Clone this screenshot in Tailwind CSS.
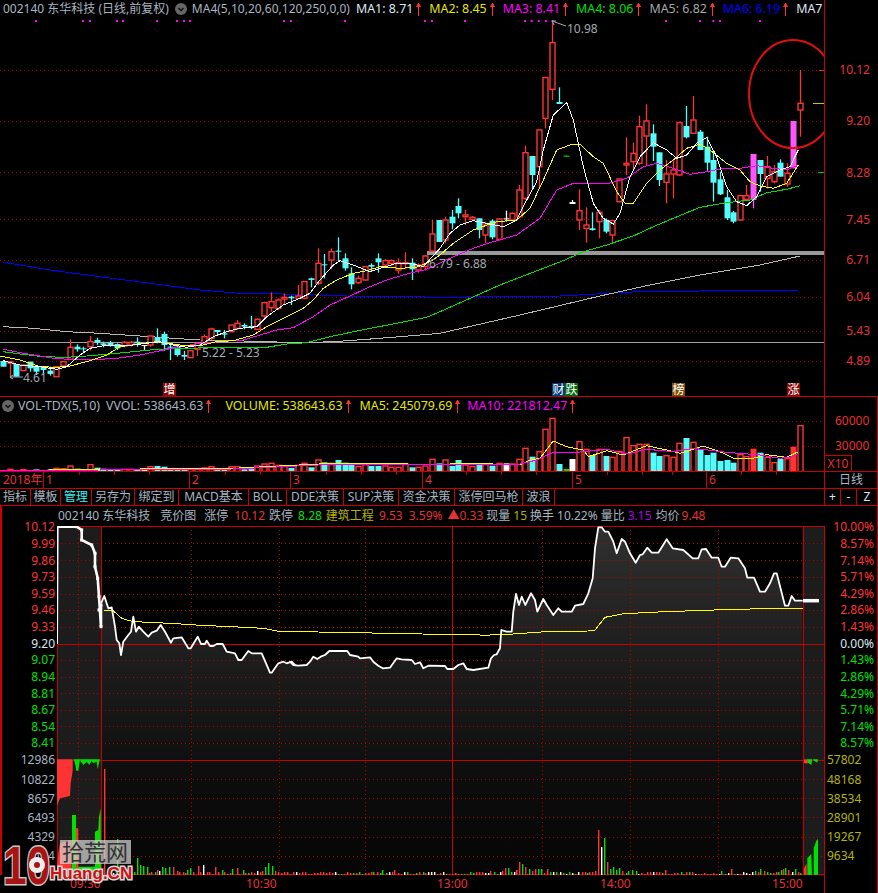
<!DOCTYPE html>
<html lang="zh">
<head>
<meta charset="UTF-8">
<title>002140 东华科技</title>
<script src="https://cdn.jsdelivr.net/npm/@tailwindcss/browser@4"></script>
</head>
<body class="bg-black">
<div class="relative w-[878px] h-[893px] overflow-hidden bg-black text-[12px] leading-none text-[#a8b4c0] font-['Noto_Sans','Noto_Sans_CJK_SC',sans-serif]">

  <!-- k line -->
  <div class="flex h-[397px] border-b border-[#c80000]">
    <div class="relative w-[825px] border-r border-[#c80000]">
      <svg id="kline" class="block" width="824" height="396" viewBox="0 0 824 396">
        <g stroke="#a00000" stroke-dasharray="1 3">
          <path d="M0 70.5H824M0 121.5H824M0 172.5H824M0 219.5H824M0 260.5H824M0 297.5H824M0 331.5H824M0 361.5H824"/>
        </g>
        <path d="M0 342.5H824" stroke="#a0a0a0"/>
        <rect x="427" y="251" width="397" height="4" fill="#999"/>
        <path d="M819 70.5H824" stroke="#e63232"/>
        <path d="M813 103.5H824" stroke="#c8c800"/>
        <path d="M818 172.5H824" stroke="#00d000"/>
        <g id="dots" fill="#ff00ff"></g>
        <g id="lines-back" fill="none"></g>
        <g id="candles"></g>
        <g id="lines-front" fill="none"></g>
        <g font-family="Noto Sans" font-size="12" fill="#a0a8b0">
          <text x="567" y="33">10.98</text>
          <text x="429" y="268">6.79 - 6.88</text>
          <text x="202" y="357">5.22 - 5.23</text>
          <text x="23" y="382">4.61</text>
        </g>
        <path d="M552 21L566 26M552 21l4 0M552 21l2 4M10 377H23M10 377l3-2M10 377l3 2" stroke="#a0a8b0" fill="none"/>
        <ellipse cx="793" cy="94" rx="44" ry="54" fill="none" stroke="#e01010" stroke-width="2"/>
      </svg>
      <div class="absolute left-[3px] top-[2px] flex items-center h-[14px] whitespace-nowrap">
        <span>002140 东华科技 (日线,前复权)</span>
        <svg class="ml-[6px] shrink-0" width="12" height="12" viewBox="0 0 12 12"><circle cx="6" cy="6" r="6" fill="#666"/><path d="M3.5 5L6 7.5L8.5 5" stroke="#111" stroke-width="1.5" fill="none"/></svg>
        <span class="ml-[5px]">MA4(5,10,20,60,120,250,0,0)</span>
        <span class="ml-[6px] text-[12.4px] text-[#dce6f0]">MA1: 8.71</span>
        <svg class="ml-[3px] shrink-0" width="5" height="14" viewBox="0 0 5 14"><path d="M2.5 1V14M0.5 5L2.5 1L4.500 5" stroke="#ff3333" fill="#ff3333"/></svg>
        <span class="ml-[8px] text-[12.4px] text-[#e6e600]">MA2: 8.45</span>
        <svg class="ml-[3px] shrink-0" width="5" height="14" viewBox="0 0 5 14"><path d="M2.5 1V14M0.5 5L2.5 1L4.500 5" stroke="#ff3333" fill="#ff3333"/></svg>
        <span class="ml-[8px] text-[12.4px] text-[#ff00ff]">MA3: 8.41</span>
        <svg class="ml-[3px] shrink-0" width="5" height="14" viewBox="0 0 5 14"><path d="M2.5 1V14M0.5 5L2.5 1L4.500 5" stroke="#ff3333" fill="#ff3333"/></svg>
        <span class="ml-[8px] text-[12.4px] text-[#00e000]">MA4: 8.06</span>
        <svg class="ml-[3px] shrink-0" width="5" height="14" viewBox="0 0 5 14"><path d="M2.5 1V14M0.5 5L2.5 1L4.500 5" stroke="#ff3333" fill="#ff3333"/></svg>
        <span class="ml-[8px] text-[12.4px] text-[#a8a8a8]">MA5: 6.82</span>
        <svg class="ml-[3px] shrink-0" width="5" height="14" viewBox="0 0 5 14"><path d="M2.5 1V14M0.5 5L2.5 1L4.500 5" stroke="#ff3333" fill="#ff3333"/></svg>
        <span class="ml-[8px] text-[12.4px] text-[#0000ff]">MA6: 6.19</span>
        <svg class="ml-[3px] shrink-0" width="5" height="14" viewBox="0 0 5 14"><path d="M2.5 1V14M0.5 5L2.5 1L4.500 5" stroke="#ff3333" fill="#ff3333"/></svg>
        <span class="ml-[8px] text-[12.4px] text-[#dce6f0]">MA7</span>
      </div>
      <div class="absolute left-[163px] top-[383px] w-[13px] h-[13px] bg-[#8a0505] text-white flex items-center justify-center">增</div>
      <div class="absolute left-[552px] top-[383px] w-[13px] h-[13px] bg-[#003a78] text-white flex items-center justify-center">财</div>
      <div class="absolute left-[565px] top-[383px] w-[13px] h-[13px] bg-[#006a10] text-white flex items-center justify-center">跌</div>
      <div class="absolute left-[672px] top-[383px] w-[13px] h-[13px] bg-[#80500a] text-white flex items-center justify-center">榜</div>
      <div class="absolute left-[787px] top-[383px] w-[13px] h-[13px] bg-[#8a0505] text-white flex items-center justify-center">涨</div>
    </div>
    <div class="flex-1 flex flex-col items-end pr-[8px] pt-[64px] text-[#e63232]">
      <div class="h-[51px]">10.12</div>
      <div class="h-[52px]">9.20</div>
      <div class="h-[47px]">8.28</div>
      <div class="h-[40px]">7.45</div>
      <div class="h-[37px]">6.71</div>
      <div class="h-[34px]">6.04</div>
      <div class="h-[30px]">5.43</div>
      <div>4.89</div>
    </div>
  </div>

  <!-- volume -->
  <div class="flex h-[75px] border-b border-[#c80000]">
    <div class="relative w-[825px] border-r border-[#c80000]">
      <svg id="vol" class="block" width="824" height="74" viewBox="0 397 824 74">
        <path d="M0 421.500H824M0 446.500H824" stroke="#a00000" stroke-dasharray="1 3"/>
        <g id="vol-bars"></g>
        <g id="vol-lines" fill="none" shape-rendering="crispEdges"></g>
      </svg>
      <div class="absolute left-[2px] top-0 flex items-center h-[16px] whitespace-nowrap mt-[1px] text-[12.4px]">
        <svg class="shrink-0" width="12" height="12" viewBox="0 0 12 12"><circle cx="6" cy="6" r="6" fill="#666"/><path d="M3.5 5L6 7.5L8.5 5" stroke="#111" stroke-width="1.5" fill="none"/></svg>
        <span class="ml-[4px]">VOL-TDX(5,10)</span>
        <span class="ml-[6px]">VVOL: 538643.63</span>
        <svg class="ml-[3px] shrink-0" width="5" height="14" viewBox="0 0 5 14"><path d="M2.5 1V14M0.5 5L2.5 1L4.500 5" stroke="#ff3333" fill="#ff3333"/></svg>
        <span class="ml-[14px] text-[#e6e600]">VOLUME: 538643.63</span>
        <svg class="ml-[3px] shrink-0" width="5" height="14" viewBox="0 0 5 14"><path d="M2.5 1V14M0.5 5L2.5 1L4.500 5" stroke="#ff3333" fill="#ff3333"/></svg>
        <span class="ml-[9px] text-[#e6e600]">MA5: 245079.69</span>
        <svg class="ml-[3px] shrink-0" width="5" height="14" viewBox="0 0 5 14"><path d="M2.5 1V14M0.5 5L2.5 1L4.500 5" stroke="#ff3333" fill="#ff3333"/></svg>
        <span class="ml-[7px] text-[#ff00ff]">MA10: 221812.47</span>
        <svg class="ml-[3px] shrink-0" width="5" height="14" viewBox="0 0 5 14"><path d="M2.5 1V14M0.5 5L2.5 1L4.500 5" stroke="#ff3333" fill="#ff3333"/></svg>
      </div>
    </div>
    <div class="flex-1 flex flex-col text-[#e63232] border-r border-[#c80000]">
      <div class="pt-[18px] pl-[10px]">60000</div>
      <div class="pt-[13px] pl-[10px]">30000</div>
      <div class="mt-[3px] w-[27px] h-[18px] border border-b-0 border-l-0 border-[#c80000] flex items-center justify-center">X10</div>
    </div>
  </div>

  <!-- date axis -->
  <div class="flex h-[16px] text-[#e63232]">
    <div class="relative w-[825px] flex border-r border-[#c80000]">
      <div class="w-[43px] pl-[3px] flex items-center">2018年</div>
      <div class="w-[146px] pl-[2px] flex items-center border-l border-[#c80000]">1</div>
      <div class="w-[101px] pl-[2px] flex items-center border-l border-[#c80000]">2</div>
      <div class="w-[132px] pl-[2px] flex items-center border-l border-[#c80000]">3</div>
      <div class="w-[150px] pl-[2px] flex items-center border-l border-[#c80000]">4</div>
      <div class="w-[134px] pl-[2px] flex items-center border-l border-[#c80000]">5</div>
      <div class="flex-1 pl-[2px] flex items-center border-l border-[#c80000]">6</div>
      <svg class="absolute left-0 top-0" width="824" height="3" viewBox="0 0 824 3"><path d="M79.500 0v3M114.500 0v3M149.500 0v3M225.500 0v3M260.500 0v3M326.500 0v3M361.500 0v3M396.500 0v3M466.500 0v3M501.500 0v3M536.500 0v3M607.500 0v3M642.500 0v3M672.500 0v3M741.500 0v3M776.500 0v3" stroke="#c80000"/></svg>
    </div>
    <div class="flex-1 flex items-center justify-center text-[#a8b4c0] border-r border-[#c80000]">日线</div>
  </div>

  <!-- toolbar -->
  <div class="flex h-[18px] border-y border-[#c80000]">
    <div class="w-[825px] flex border-r border-[#c80000]">
      <div class="w-[31px] flex items-center justify-center border-r border-[#c80000]">指标</div>
      <div class="w-[30px] flex items-center justify-center border-r border-[#c80000]">模板</div>
      <div class="w-[31px] flex items-center justify-center border-r border-[#c80000] text-[#3cf0f0]">管理</div>
      <div class="w-[43px] flex items-center justify-center border-r border-[#c80000]">另存为</div>
      <div class="w-[44px] flex items-center justify-center border-r border-[#c80000]">绑定到</div>
      <div class="w-[70px] flex items-center justify-center border-r border-[#c80000]">MACD基本</div>
      <div class="w-[38px] flex items-center justify-center border-r border-[#c80000]">BOLL</div>
      <div class="w-[57px] flex items-center justify-center border-r border-[#c80000]">DDE决策</div>
      <div class="w-[55px] flex items-center justify-center border-r border-[#c80000]">SUP决策</div>
      <div class="w-[56px] flex items-center justify-center border-r border-[#c80000]">资金决策</div>
      <div class="w-[68px] flex items-center justify-center border-r border-[#c80000]">涨停回马枪</div>
      <div class="w-[32px] flex items-center justify-center border-r border-[#c80000]">波浪</div>
    </div>
    <div class="flex-1 flex text-[#dce6f0] border-r border-[#c80000]">
      <div class="w-[16px] flex items-center justify-center border-r border-[#c80000]">+</div>
      <div class="w-[16px] flex items-center justify-center border-r border-[#c80000]">-</div>
      <div class="flex-1 flex items-center justify-center">Z</div>
    </div>
  </div>

  <!-- time share -->
  <div class="flex flex-col h-[369px] border-l-[2px] border-r border-[#c80000]">
    <div class="flex items-center h-[20px] pl-[56px] whitespace-nowrap">
      <span>002140 东华科技</span>
      <span class="ml-[10px]">竞价图</span>
      <span class="ml-[8px]">涨停</span>
      <span class="ml-[6px] text-[#e63232]">10.12</span>
      <span class="ml-[4px]">跌停</span>
      <span class="ml-[5px] text-[#00e000]">8.28</span>
      <span class="ml-[4px] text-[#b4b400]">建筑工程</span>
      <span class="ml-[5px] text-[#e63232]">9.53</span>
      <span class="ml-[6px] text-[#e63232]">3.59%</span>
      <span class="ml-[5px] text-[#e63232]">▲0.33</span>
      <span class="ml-[3px]">现量</span>
      <span class="ml-[3px] text-[#b4b400]">15</span>
      <span class="ml-[3px]">换手</span>
      <span class="ml-[3px]">10.22%</span>
      <span class="ml-[3px]">量比</span>
      <span class="ml-[3px] text-[#b000e0]">3.15</span>
      <span class="ml-[4px]">均价</span>
      <span class="ml-[2px] text-[#e63232]">9.48</span>
    </div>
    <div class="flex flex-1">
      <div class="w-[55px] -mt-[7px] pr-[2px] flex flex-col items-end">
        <div class="h-[16.63px] flex items-center text-[#ff3333]">10.12</div>
        <div class="h-[16.63px] flex items-center text-[#ff3333]">9.99</div>
        <div class="h-[16.63px] flex items-center text-[#ff3333]">9.86</div>
        <div class="h-[16.63px] flex items-center text-[#ff3333]">9.73</div>
        <div class="h-[16.63px] flex items-center text-[#ff3333]">9.59</div>
        <div class="h-[16.63px] flex items-center text-[#ff3333]">9.46</div>
        <div class="h-[16.63px] flex items-center text-[#ff3333]">9.33</div>
        <div class="h-[16.63px] flex items-center text-[#dce6f0]">9.20</div>
        <div class="h-[16.63px] flex items-center text-[#00e000]">9.07</div>
        <div class="h-[16.63px] flex items-center text-[#00e000]">8.94</div>
        <div class="h-[16.63px] flex items-center text-[#00e000]">8.81</div>
        <div class="h-[16.63px] flex items-center text-[#00e000]">8.67</div>
        <div class="h-[16.63px] flex items-center text-[#00e000]">8.54</div>
        <div class="h-[16.63px] flex items-center text-[#00e000]">8.41</div>
        <div class="h-[19.2px] -mt-[1px] flex items-center">12986</div>
        <div class="h-[19.2px] flex items-center">10822</div>
        <div class="h-[19.2px] flex items-center">8657</div>
        <div class="h-[19.2px] flex items-center">6493</div>
        <div class="h-[19.2px] flex items-center">4329</div>
        <div class="h-[19.2px] flex items-center">2164</div>
      </div>
      <svg id="tick" class="block shrink-0" width="768" height="349" viewBox="57 526 768 349">
        <defs>
          <linearGradient id="area" gradientUnits="userSpaceOnUse" x1="0" y1="527" x2="0" y2="760">
            <stop offset="0" stop-color="#303030"/>
            <stop offset="0.5" stop-color="#1f1f1f"/>
            <stop offset="1" stop-color="#101010"/>
          </linearGradient>
          <linearGradient id="volbg" gradientUnits="userSpaceOnUse" x1="0" y1="760" x2="0" y2="875">
            <stop offset="0" stop-color="#0f0f0f"/>
            <stop offset="1" stop-color="#050505"/>
          </linearGradient>
        </defs>
        <rect x="102" y="760" width="701" height="115" fill="url(#volbg)"/>
        <rect x="57" y="526" width="44" height="349" fill="#1c1c1c"/>
        <rect x="803" y="526" width="22" height="349" fill="#1c1c1c"/>
        <path id="tick-area" fill="url(#area)"/>
        <g stroke="#b00000" stroke-dasharray="1 3">
          <path d="M57 543.500H824M57 560.500H824M57 577.500H824M57 594.500H824M57 610.500H824M57 627.500H824M57 660.500H824M57 677.500H824M57 693.500H824M57 710.500H824M57 726.500H824M57 743.500H824M57 779.500H824M57 798.500H824M57 817.500H824M57 837.500H824M57 856.500H824"/>
          <path d="M78.500 526V875M191.500 526V875M279.500 526V875M365.500 526V875M542.500 526V875M630.500 526V875M718.500 526V875"/>
        </g>
        <g stroke="#c80000">
          <path d="M57 526.500H825M57 644.500H825M57 760.500H825M57 874.500H825"/>
          <path d="M57.500 526V875M101.500 526V875M452.500 526V875M803.500 526V875M824.500 526V875"/>
        </g>
        <g id="tick-vol"></g>
        <g id="tick-lines" fill="none"></g>
      </svg>
      <div class="flex-1 -mt-[7px] pr-[3px] flex flex-col items-end">
        <div class="h-[16.63px] flex items-center text-[#ff3333]">10.00%</div>
        <div class="h-[16.63px] flex items-center text-[#ff3333]">8.57%</div>
        <div class="h-[16.63px] flex items-center text-[#ff3333]">7.14%</div>
        <div class="h-[16.63px] flex items-center text-[#ff3333]">5.71%</div>
        <div class="h-[16.63px] flex items-center text-[#ff3333]">4.29%</div>
        <div class="h-[16.63px] flex items-center text-[#ff3333]">2.86%</div>
        <div class="h-[16.63px] flex items-center text-[#ff3333]">1.43%</div>
        <div class="h-[16.63px] flex items-center text-[#dce6f0]">0.00%</div>
        <div class="h-[16.63px] flex items-center text-[#00e000]">1.43%</div>
        <div class="h-[16.63px] flex items-center text-[#00e000]">2.86%</div>
        <div class="h-[16.63px] flex items-center text-[#00e000]">4.29%</div>
        <div class="h-[16.63px] flex items-center text-[#00e000]">5.71%</div>
        <div class="h-[16.63px] flex items-center text-[#00e000]">7.14%</div>
        <div class="h-[16.63px] flex items-center text-[#00e000]">8.57%</div>
        <div class="self-start pl-[2px] -mt-[1px] text-[#b4b400]">
          <div class="h-[19.2px] flex items-center">57802</div>
          <div class="h-[19.2px] flex items-center">48168</div>
          <div class="h-[19.2px] flex items-center">38534</div>
          <div class="h-[19.2px] flex items-center">28901</div>
          <div class="h-[19.2px] flex items-center">19267</div>
          <div class="h-[19.2px] flex items-center">9634</div>
        </div>
      </div>
    </div>
  </div>

  <!-- time axis -->
  <div class="relative h-[18px] border-r border-[#c80000] text-[#e63232]">
    <div class="absolute left-[824px] top-0 h-[18px] border-l border-[#c80000]"></div>
    <div class="flex h-full items-center pl-[70px]">
      <span class="w-[176px]">09:30</span>
      <span class="w-[191px]">10:30</span>
      <span class="w-[163px]">13:00</span>
      <span class="w-[172px]">14:00</span>
      <span>15:00</span>
    </div>
  </div>

  <!-- watermark -->
  <svg class="absolute left-0 top-[838px]" width="140" height="55" viewBox="0 0 140 55">
    <rect x="60" y="2" width="71" height="24" fill="#cfcfcf" fill-opacity="0.75"/>
    <text x="62" y="22" font-family="Noto Sans CJK SC" font-size="22" fill="#333">拾荒网</text>
    <text x="3" y="46" font-family="Liberation Sans" font-size="54" font-weight="bold" fill="#a81414" stroke="#c8c8c8" stroke-width="3" paint-order="stroke" textLength="47" lengthAdjust="spacingAndGlyphs">10</text>
    <circle cx="37" cy="27" r="8" fill="#eee"/>
    <circle cx="37" cy="27" r="3" fill="#a81414"/>
    <text x="50" y="41" font-family="Liberation Sans" font-size="17" font-weight="bold" fill="#c81414" stroke="#d8d8d8" stroke-width="3" paint-order="stroke">Huang.CN</text>
  </svg>
</div>

<script>
  const NS = "http://www.w3.org/2000/svg";
  function add(parent, tag, attrs) {
    const el = document.createElementNS(NS, tag);
    for (const k in attrs) el.setAttribute(k, attrs[k]);
    parent.appendChild(el);
    return el;
  }
  const RED = "#ff3333", CYAN = "#54fcfc", MAG = "#ff55ff";
  const z7 = (p) => [p[0] / 3, 230 + p[1] / 3];
  const z2 = (p) => [440 + p[0] / 3, p[1] / 3];
  const pts = (a) => a.map((p) => p[0].toFixed(1) + "," + p[1].toFixed(1)).join(" ");

  // X, wick top, body top, body bottom, wick bottom, kind, volume top
  const left = [
    [10,393,393,410,410,"c",270],[29,395,395,400,445,"r",268],[48,402,402,440,440,"c",272],[69,405,405,422,422,"r",269],
    [90,395,395,415,425,"c",274],[109,408,408,425,435,"c",268],[130,408,408,420,433,"c",271],[150,410,422,432,437,"c",268],
    [168,410,410,440,440,"r",265],[189,395,395,408,408,"r",266],[209,328,352,388,390,"r",258],[231,343,350,358,365,"c",266],
    [250,350,355,358,370,"c",268],[270,318,335,350,362,"r",254],[291,323,330,338,345,"c",263],[310,335,340,345,352,"c",266],
    [331,333,338,345,350,"c",268],[351,340,342,355,360,"c",268],[371,333,337,348,352,"r",268],[392,333,337,345,350,"r",268],
    [412,322,335,340,350,"c",268],[432,345,345,347,362,"w",270],[451,316,318,345,350,"r",260],[471,295,322,335,340,"c",258],
    [492,305,312,345,362,"c",260],[511,340,350,352,390,"c",265],[532,345,350,375,380,"c",266],[552,363,375,380,390,"c",267],
    [571,362,362,383,383,"r",268],[591,338,340,358,378,"r",266],[612,313,320,340,345,"r",264],[632,293,297,325,330,"r",260],
    [652,300,300,306,318,"c",266],[672,300,310,314,325,"c",268],[692,285,285,305,305,"r",260],[712,270,280,295,300,"r",260],
    [732,280,285,290,298,"c",268],[753,258,288,292,298,"c",262],[771,265,268,298,300,"r",258],[793,215,218,258,270,"r",252],
    [813,187,215,233,245,"r",250],[833,205,210,235,240,"r",256],[853,190,202,207,222,"r",258],[873,197,200,205,225,"c",264],
    [893,165,198,205,205,"r",256],[912,153,155,205,208,"r",250],[933,143,145,150,172,"c",262],[954,55,100,160,165,"r",240],
    [973,72,103,105,145,"c",247],[993,55,65,90,118,"r",250],[1013,22,62,65,95,"c",240],[1036,70,85,115,122,"c",248],
    [1053,112,130,163,178,"c",255],[1074,137,145,158,162,"r",260],[1094,108,110,150,152,"r",254],[1114,100,105,110,125,"c",258],
    [1134,70,85,97,128,"c",258],[1155,87,92,105,108,"r",258],[1173,88,92,100,108,"r",262],[1194,85,98,120,132,"r",262],
    [1214,67,98,100,118,"r",252],[1235,85,98,118,150,"c",262],[1254,100,105,120,128,"r",262],[1274,75,78,110,122,"r",258],
    [1296,-30,12,63,63,"r",238],[1316,-30,-30,36,36,"c",250]
  ];
  const right = [
    [15,650,660,720,730,"r",240],[37,630,650,670,688,"c",258],[55,595,618,640,655,"c",240],[76,630,645,650,675,"r",255],
    [97,648,652,658,660,"r",260],[116,655,655,690,715,"c",253],[135,665,672,705,730,"r",252],[157,658,662,712,718,"c",257],
    [177,655,657,718,722,"r",250],[197,632,655,658,665,"w",250],[216,637,640,660,665,"r",252],[237,555,570,650,655,"r",238],
    [255,437,458,595,600,"r",205],[277,468,468,525,565,"c",230],[296,388,390,500,565,"r",215],[316,230,233,355,385,"r",148],
    [336,62,128,268,300,"r",115],[356,262,306,312,312,"c",252],[377,467,467,470,470,"g",267],[397,600,606,612,612,"w",237],
    [417,568,632,660,690,"r",185],[437,622,675,685,728,"r",208],[457,637,685,690,692,"c",225],[477,630,637,665,715,"r",208],
    [497,655,660,695,700,"c",228],[517,662,662,705,733,"r",232],[537,535,537,605,607,"r",214],[557,412,490,495,525,"r",173],
    [578,428,460,485,510,"r",197],[597,347,380,490,495,"r",193],[618,313,363,408,495,"r",193],[640,373,400,440,483,"c",218],
    [658,457,457,540,558,"c",228],[678,480,522,547,610,"r",227],[698,480,510,522,595,"r",232],[717,365,368,525,527,"r",190],
    [738,318,378,412,415,"c",174],[759,288,360,400,402,"r",187],[780,390,395,450,450,"c",208],[800,410,440,488,512,"c",225],
    [820,455,480,548,605,"c",218],[840,515,538,583,585,"c",243],[860,570,592,655,660,"c",240],[880,633,637,665,670,"c",248],
    [900,585,587,660,662,"r",224],[919,555,587,598,600,"r",230],[940,462,462,600,625,"m",206],[960,480,480,522,575,"c",218],
    [982,468,500,535,565,"r",232],[1002,495,515,545,550,"r",248],[1020,478,488,530,530,"c",236],[1040,490,520,552,560,"r",236],
    [1060,363,363,505,505,"m",200],[1080,210,310,330,410,"r",137]
  ];

  const kinds = { r: RED, c: CYAN, m: MAG, w: "#ffffff", g: "#00e000" };
  const candles = document.getElementById("candles");
  const volBars = document.getElementById("vol-bars");
  function drawCandle(c, conv, volBase) {
    const col = kinds[c[5]];
    const x = Math.round(conv([c[0], 0])[0]) + 0.5;
    const y = (v) => conv([0, v])[1];
    add(candles, "line", { x1: x, x2: x, y1: y(c[1]), y2: y(c[4]), stroke: col, "stroke-width": 1.3 });
    const top = y(c[2]), h = Math.max(y(c[3]) - top, 1);
    if (c[5] === "r") add(candles, "rect", { x: x - 2.5, y: top, width: 5, height: h, fill: "#000", stroke: col, "stroke-width": 1.4 });
    else add(candles, "rect", { x: x - 3, y: top, width: 6, height: h, fill: col });
    const vt = 380 + c[6] / 3;
    if (c[5] === "r") add(volBars, "rect", { x: x - 2.5, y: vt, width: 5, height: 472 - vt, fill: "#000", stroke: col, "stroke-width": 1.4 });
    else add(volBars, "rect", { x: x - 3, y: vt, width: 6, height: 472 - vt, fill: c[5] === "m" ? RED : col });
  }
  left.forEach((c) => drawCandle(c, z7));
  right.forEach((c) => drawCandle(c, z2));

  // moving averages
  const back = document.getElementById("lines-back");
  const front = document.getElementById("lines-front");
  const blue = [[10,97],[150,120],[300,140],[450,160],[600,180],[720,190],[900,193],[1040,198],[1230,200],[1320,202]].map(z7).concat([[560,296],[650,291],[700,291],[800,290]]);
  const gray = [[10,290],[100,295],[200,305],[300,310],[420,318],[520,325],[600,330],[700,332],[900,338],[1000,335],[1100,328],[1200,320],[1320,310]].map(z7).concat([[520,315],[600,296],[650,285],[700,275],[760,265],[800,256]]);
  const green = [[10,365],[60,372],[130,380],[200,382],[260,378],[330,372],[400,365],[470,358],[550,355],[640,353],[740,353],[800,352],[860,342],[920,338],[1000,318],[1100,297],[1200,278],[1280,262],[1320,245]].map(z7).concat([[500,285]]).concat([[375,780],[430,755],[500,735],[580,708],[640,680],[700,655],[780,622],[860,608],[930,600],[980,578],[1040,568],[1080,557]].map(z2));
  const magenta = [[10,358],[60,368],[120,378],[160,385],[240,390],[300,388],[350,385],[420,375],[480,362],[540,350],[600,340],[660,335],[730,330],[780,315],[830,300],[880,293],[940,260],[990,225],[1050,198],[1110,170],[1160,150],[1220,132],[1280,118]].map(z7).concat([[30,775],[100,745],[160,725],[230,705],[300,655],[350,570],[400,550],[500,552],[560,535],[610,500],[650,490],[700,505],[750,523],[800,515],[850,505],[900,505],[950,497],[1000,505],[1040,510],[1075,495]].map(z2));
  const yellow = [[0,378],[60,390],[120,410],[170,412],[210,408],[270,392],[320,375],[360,350],[430,340],[470,335],[540,345],[600,347],[650,335],[700,332],[760,315],[800,290],[860,260],[910,235],[940,210],[970,175],[1010,150],[1060,130],[1100,122],[1140,110],[1200,115],[1250,112],[1290,95]].map(z7).concat([[0,765],[40,730],[100,690],[170,665],[230,660],[270,625],[310,540],[350,450],[390,435],[420,433],[460,470],[490,490],[530,575],[555,610],[580,610],[620,550],[660,510],[700,480],[740,445],[780,432],[810,450],[860,490],[900,510],[930,545],[960,558],[1000,565],[1040,550],[1075,495]].map(z2));
  const white = [[10,392],[60,405],[120,410],[170,418],[200,410],[240,375],[270,355],[320,345],[400,345],[480,335],[520,345],[560,352],[600,345],[640,320],[680,305],[720,295],[770,290],[800,260],[850,225],[900,205],[930,190],[960,150],[1000,105],[1020,92],[1060,105],[1110,125],[1150,112],[1190,100],[1230,100],[1270,110]].map(z7).concat([[0,745],[30,700],[60,675],[100,662],[140,670],[190,680],[230,660],[260,600],[290,545],[310,450],[340,345],[380,308],[400,360],[430,500],[460,610],[490,655],[520,672],[540,640],[570,530],[600,470],[640,428],[680,450],[710,475],[740,465],[770,430],[800,413],[830,470],[860,560],[890,605],[920,617],[950,590],[980,530],[1020,510],[1050,500],[1075,450]].map(z2));
  const thin = { "stroke-width": 1, "shape-rendering": "crispEdges" };
  add(back, "polyline", { points: pts(blue), stroke: "#0000ff", ...thin });
  add(back, "polyline", { points: pts(gray), stroke: "#b8b8b8", ...thin });
  add(front, "polyline", { points: pts(green), stroke: "#00e000", ...thin });
  add(front, "polyline", { points: pts(magenta), stroke: "#ff00ff", ...thin });
  add(front, "polyline", { points: pts(yellow), stroke: "#ffff00", ...thin });
  add(front, "polyline", { points: pts(white), stroke: "#ffffff", ...thin });

  // little magenta dots under the title
  const dots = document.getElementById("dots");
  [108,249,270,351,369,471,531,552,570,852,873,1035,1275,1296].forEach((X) => add(dots, "rect", { x: X / 3 - 1, y: 20, width: 2, height: 2 }));
  [75,255,275,296,318,338,678,780,820,840,960].forEach((X) => add(dots, "rect", { x: 440 + X / 3 - 1, y: 20, width: 2, height: 2 }));

  // volume averages
  const z4 = (p) => [440 + p[0] / 3, 380 + p[1] / 3];
  const z3 = (p) => [p[0] / 3, 380 + p[1] / 3];
  const vl = document.getElementById("vol-lines");
  const vy = [[0,272],[300,268],[700,265],[1000,250],[1320,253]].map(z3).concat([[0,253],[100,250],[240,255],[270,240],[300,235],[340,183],[380,200],[430,210],[445,230],[500,212],[550,225],[620,197],[680,210],[720,220],[790,198],[840,215],[880,235],[930,237],[980,224],[1040,232],[1075,215]].map(z4));
  const vm = [[0,273],[300,270],[700,267],[1000,253],[1320,254]].map(z3).concat([[0,252],[120,252],[240,252],[290,240],[340,217],[400,218],[500,208],[560,222],[620,208],[700,215],[760,205],[860,217],[960,225],[1020,235],[1060,230],[1075,220]].map(z4));
  add(vl, "polyline", { points: pts(vy), stroke: "#ffff00", "stroke-width": 1 });
  add(vl, "polyline", { points: pts(vm), stroke: "#ff00ff", "stroke-width": 1 });

  // time share lines
  const z8 = (p) => [p[0] / 3, 520 + p[1] / 3];
  const z9 = (p) => [290 + p[0] / 3, 515 + p[1] / 3];
  const z10 = (p) => [490 + p[0] / 3, 515 + p[1] / 3];
  const z5 = (p) => [p[0] / 3, 750 + p[1] / 3];
  const z6 = (p) => [578 + p[0] / 3, 750 + p[1] / 3];
  const tl = document.getElementById("tick-lines");
  const pre = [[170,372],[172,20],[230,20],[245,30],[245,60],[275,75],[285,100],[285,140],[293,175],[297,230],[303,320],[303,255],[297,270]].map(z8);
  const price = [[303,250],[313,228],[325,265],[335,262],[345,320],[350,360],[358,370],[363,405],[370,365],[385,345],[393,335],[400,290],[408,335],[416,320],[430,335],[445,350],[455,338],[470,332],[482,315],[495,335],[513,368],[520,355],[545,352],[565,385],[572,385],[593,350],[603,372],[615,372],[620,362],[630,378],[640,378],[650,372],[668,372],[680,395],[705,400],[715,420],[725,420],[745,393],[755,400],[785,400],[810,458],[815,458],[835,430],[850,425],[860,430],[875,425],[885,435]].map(z8)
    .concat([[0,440],[10,450],[25,452],[50,450],[60,440],[70,425],[82,432],[92,425],[105,420],[118,408],[172,408],[180,420],[205,425],[210,430],[240,427],[250,440],[265,452],[278,460],[300,458],[320,430],[335,433],[365,435],[375,447],[390,442],[400,460],[415,452],[465,453],[472,462],[490,462],[505,450],[520,445],[530,462],[550,465],[595,458],[603,430],[612,420],[620,418],[630,400],[634,345],[650,350],[665,350],[670,290],[678,237],[687,270],[695,245],[706,270],[723,235],[735,255],[742,290],[760,252],[770,270],[790,300],[805,280]].map(z9))
    .concat([[215,290],[245,290],[255,272],[280,267],[295,235],[308,190],[315,100],[325,37],[335,37],[345,50],[355,50],[370,80],[380,115],[395,72],[405,80],[420,115],[437,143],[450,120],[458,118],[472,98],[485,113],[505,113],[530,73],[548,100],[580,105],[608,130],[625,130],[635,103],[648,102],[665,128],[685,128],[695,155],[705,155],[722,128],[745,130],[765,160],[772,188],[792,188],[810,230],[825,230],[840,205],[852,175],[860,175],[885,272],[895,272],[905,243],[915,257],[938,257]].map(z10));
  const avg = [[313,272],[338,271],[365,295],[395,304],[440,307],[510,310],[600,316],[695,320],[790,325],[830,333],[865,334]].map(z8)
    .concat([[0,349],[35,350],[245,354],[395,357],[490,358],[570,360]].map(z9))
    .concat([[0,360],[70,357],[165,350],[295,348],[315,345],[345,307],[400,296],[525,290],[700,284],[815,281],[938,280]].map(z10));
  document.getElementById("tick-area").setAttribute("d", "M" + price.map((p) => p[0].toFixed(1) + " " + p[1].toFixed(1)).join("L") + "L" + price[price.length - 1][0].toFixed(1) + " 760L102 760Z");
  add(tl, "polyline", { points: pts(avg), stroke: "#ffff00", ...thin });
  add(tl, "polyline", { points: pts(price), stroke: "#ffffff", "stroke-width": 1.8, "stroke-linejoin": "round" });
  add(tl, "polyline", { points: pts(pre), stroke: "#ffffff", "stroke-width": 2.6 });
  pre.slice(1).forEach((p) => add(tl, "rect", { x: p[0] - 1.5, y: p[1] - 1.5, width: 3, height: 3, fill: "#fff" }));
  add(tl, "line", { x1: 803, x2: 819, y1: 600.7, y2: 600.7, stroke: "#fff", "stroke-width": 3.5 });

  // volume of the time share chart
  const tv = document.getElementById("tick-vol");
  const poly = (conv, a, fill) => add(tv, "polygon", { points: pts(a.map(conv)), fill: fill });
  const G = "#00e000", W = "#ffffff";
  poly(z5, [[170,28],[218,28],[218,62],[212,100],[210,138],[180,145],[172,165],[170,165]], RED);
  poly(z5, [[220,28],[300,28],[298,35],[293,58],[290,35],[280,40],[275,32],[268,45],[260,35],[250,45],[240,30],[235,62],[229,62],[226,45],[222,30]], G);
  poly(z5, [[170,375],[170,360],[175,310],[180,280],[215,270],[215,375]], RED);
  poly(z5, [[216,195],[228,195],[228,375],[216,375]], G);
  poly(z5, [[228,235],[235,235],[235,375],[228,375]], RED);
  poly(z5, [[235,350],[285,350],[285,245],[295,240],[297,200],[302,175],[303,375],[235,375]], G);
  poly(z6, [[678,375],[678,355],[686,340],[686,375]], RED);
  poly(z6, [[688,325],[700,312],[702,375],[688,375]], G);
  poly(z6, [[707,295],[715,272],[720,267],[720,375],[707,375]], G);
  poly(z6, [[678,28],[690,28],[690,40],[678,40]], RED);
  poly(z6, [[688,28],[703,28],[700,45],[690,38]], G);
  poly(z6, [[704,28],[720,28],[718,38],[708,32]], G);

  // [x, height, colour]
  const peaks = [
    [104,106,RED],[117,36,G],[137,17,G],[140,10,G],[143,9,G],[147,8,G],[151,3,RED],[157,5,RED],[159,4,W],[162,8,G],[165,7,G],[169,8,G],[173,8,RED],
    [177,4,RED],[183,3,RED],[187,5,G],[190,7,G],[193,3,RED],[198,9,RED],[203,10,W],[207,3,RED],[215,8,RED],[218,3,RED],[222,5,G],[232,6,G],[237,7,RED],[243,5,G],[248,2,G],[257,4,W],[262,4,RED],[265,8,G],[268,12,G],[272,9,G],[275,4,RED],
    [373,3,G],[382,5,G],[394,5,RED],[423,3,G],[490,4,RED],[502,4,RED],[505,7,RED],[508,7,G],[511,3,G],[514,3,W],[516,5,RED],[516,5,RED],[519,13,RED],[522,11,G],[525,8,RED],[529,6,G],[532,4,RED],[535,6,RED],[538,6,G],[541,6,G],[544,2,RED],[547,6,RED],[550,3,G],[553,3,W],[556,3,G],
    [569,3,G],[572,2,W],[578,3,W],[582,3,RED],[585,3,RED],[589,3,RED],[592,3,RED],[595,4,RED],[598,45,RED],[601,28,W],[604,37,G],[607,13,RED],[610,6,G],[613,8,G],[616,5,G],[619,7,G],[622,4,RED],[628,4,G],[632,5,G],[636,4,G],
    [665,5,RED],[681,3,G],[721,4,G],[731,6,RED],[743,3,W],[755,4,G],[760,6,G],[764,4,RED],[778,3,G],[781,5,G],[783,6,RED],[785,7,G],[788,5,RED],[792,3,W],[795,6,G],[798,3,RED]
  ];
  const slot = (x) => Math.round((x - 104) / 3);
  const taken = new Set(peaks.map((p) => slot(p[0])));
  let seed = 77;
  for (let i = 0; i < 233; i++) {
    seed = (seed * 1103515245 + 12345) & 0x7fffffff;
    const a = seed % 10, h = 1 + ((seed >> 8) % 3);
    if (taken.has(i)) continue;
    const c = a < 5 ? RED : a < 8 ? G : W;
    add(tv, "rect", { x: 104 + i * 3, y: 875 - h, width: 1.4, height: h, fill: c });
  }
  peaks.forEach((p) => add(tv, "rect", { x: p[0], y: 875 - p[1], width: 1.4, height: p[1], fill: p[2] }));
</script>
</body>
</html>
